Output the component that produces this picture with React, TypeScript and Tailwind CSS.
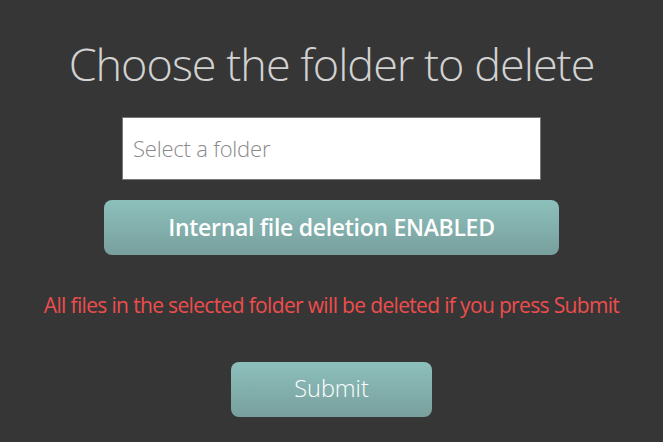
export default function App() {
  return (
    <div className="w-[663px] h-[442px] bg-[#363636] flex flex-col items-center" style={{ fontFamily: '"Open Sans", "Noto Sans", sans-serif' }}>
      <h1 className="mt-[34px] h-[60px] text-[45px] leading-[60px] font-light text-[#d2d2d2] tracking-[-1px] whitespace-nowrap">
        Choose the folder to delete
      </h1>
      <div className="mt-[23px] w-[419px] h-[63px] bg-white border border-[#777] flex items-center px-[10px]">
        <span className="text-[22px] font-light text-[#8a8a8a] tracking-[-0.2px]">Select a folder</span>
      </div>
      <div className="mt-[20px] w-[455px] h-[55px] rounded-[8px] bg-gradient-to-b from-[#8dc0bc] to-[#789f9d] flex items-center justify-center">
        <span className="text-[23px] font-semibold text-white tracking-[-0.3px]">Internal file deletion ENABLED</span>
      </div>
      <p className="mt-[35px] text-[21px] text-[#ee4d4d] font-normal tracking-[-0.66px] whitespace-nowrap">
        All files in the selected folder will be deleted if you press Submit
      </p>
      <div className="mt-[40px] w-[201px] h-[55px] rounded-[8px] bg-gradient-to-b from-[#8dc0bc] to-[#789f9d] flex items-center justify-center">
        <span className="text-[23.5px] font-light text-white">Submit</span>
      </div>
    </div>
  );
}
